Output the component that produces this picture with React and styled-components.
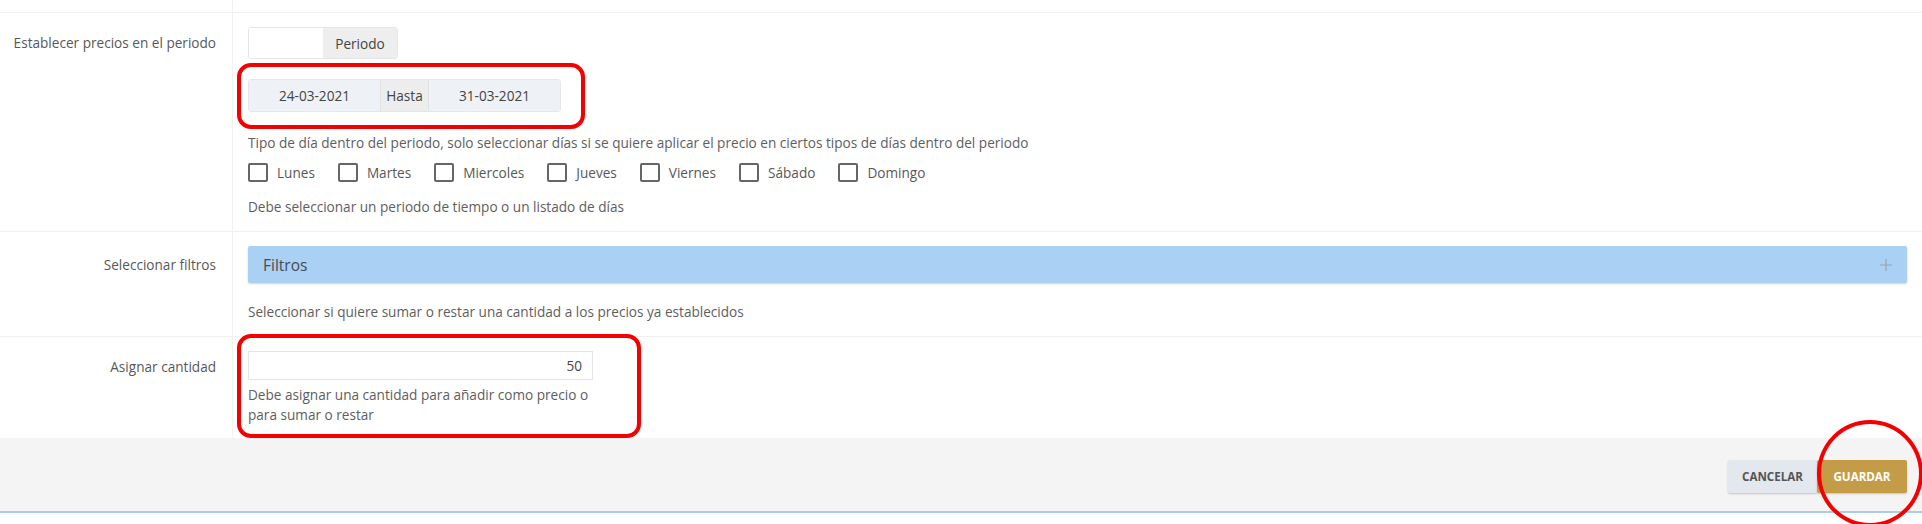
import React from 'react'
import styled, { createGlobalStyle } from 'styled-components'

const GlobalStyle = createGlobalStyle`
  html, body {
    margin: 0;
    padding: 0;
    background: #fff;
    overflow: hidden;
  }
  body {
    font-family: "Open Sans", "Noto Sans", sans-serif;
    font-size: 13.6px;
    color: #595959;
  }
  * { box-sizing: border-box; }
`;

const Page = styled.div`
  width: 1922px;
  height: 524px;
  display: flex;
  flex-direction: column;
`;

const Row = styled.div`
  display: grid;
  grid-template-columns: 233px 1fr;
  border-top: ${p => (p.$first ? 'none' : '1px solid #f0f0f0')};
  height: ${p => p.$height || 'auto'};
`;

const Label = styled.div`
  border-right: 1px solid #f1f1f1;
  text-align: right;
  padding: ${p => p.$top || 0}px 16px 0 0;
  line-height: 20px;
  color: #585858;
  white-space: nowrap;
`;

const Field = styled.div`
  padding: 14px 15px ${p => p.$bottom || 14}px 15px;
  display: flex;
  flex-direction: column;
  align-items: flex-start;
`;

const Group = styled.div`
  display: flex;
  height: ${p => p.$h}px;
  border-radius: 3px;
  overflow: hidden;
  border: 1px solid #e6e6e6;
`;

const Part = styled.div`
  width: ${p => p.$w}px;
  display: flex;
  align-items: center;
  justify-content: center;
  background: ${p => p.$bg || '#fff'};
  border-left: ${p => (p.$sep ? '1px solid #e2e2e2' : 'none')};
  color: #444;
`;

const Marked = styled.div`
  position: relative;
  &::after {
    content: '';
    position: absolute;
    inset: ${p => p.$inset};
    border: 4px solid #f40000;
    border-radius: ${p => p.$radius || '14px'};
    pointer-events: none;
  }
`;

const Help = styled.div`
  line-height: 20px;
  color: #5e5e5e;
  margin-top: ${p => p.$mt || 0}px;
  width: ${p => p.$w || 'auto'};
`;

const Days = styled.div`
  display: flex;
  align-items: center;
  margin-top: 10px;
  height: 19px;
`;

const Day = styled.label`
  display: flex;
  align-items: center;
  margin-right: 23px;
  color: #585858;
  line-height: 19px;
`;

const Box = styled.span`
  width: 20px;
  height: 19px;
  border: 2px solid #666;
  border-radius: 2px;
  margin-right: 9px;
  background: #fff;
`;

const Panel = styled.div`
  align-self: stretch;
  height: 37px;
  background: #aad0f4;
  border-radius: 2px;
  box-shadow: 0 1px 2px rgba(0, 0, 0, 0.18);
  display: flex;
  align-items: center;
  justify-content: space-between;
  padding: 0 14px 0 15px;
  font-size: 15.5px;
  color: #454c55;
`;

const Amount = styled.div`
  width: 345px;
  height: 29px;
  border: 1px solid #e4e4e4;
  display: flex;
  align-items: center;
  justify-content: flex-end;
  padding-right: 10px;
  color: #444;
`;

const Footer = styled.div`
  height: 75px;
  background: #f4f4f4;
  border-top: 1px solid #f4f4f4;
  border-bottom: 2px solid #a8cded;
  display: flex;
  justify-content: flex-end;
  align-items: flex-start;
  padding: 21px 15px 0 0;
`;

const Button = styled.button`
  height: 33px;
  width: ${p => p.$w}px;
  border: none;
  border-radius: 2px;
  font-family: "Open Sans", sans-serif;
  font-size: 11.6px;
  font-weight: 700;
  background: ${p => (p.$primary ? '#c49c48' : '#e3e7ee')};
  color: ${p => (p.$primary ? '#fff' : '#555')};
  box-shadow: 0 1px 2px rgba(0, 0, 0, 0.2);
  cursor: pointer;
`;

const dias = ['Lunes', 'Martes', 'Miercoles', 'Jueves', 'Viernes', 'Sábado', 'Domingo']

const PlusIcon = () => (
  <svg width="14" height="14" viewBox="0 0 14 14">
    <path d="M7 1v12M1 7h12" stroke="#9aa4ae" strokeWidth="1.2" />
  </svg>
)

export default function App() {
  return (
    <Page>
      <GlobalStyle />
      <Row $first $height="12px">
        <Label />
        <div />
      </Row>

      <Row>
        <Label $top={20}>Establecer precios en el periodo</Label>
        <Field>
          <Group $h={32}>
            <Part $w={74} />
            <Part $w={74} $bg="#eeeeee">Periodo</Part>
          </Group>
          <Marked $inset="-16px -24px -17px -11px" style={{ marginTop: 20 }}>
            <Group $h={33}>
              <Part $w={131} $bg="#eef1f5">24-03-2021</Part>
              <Part $w={48} $bg="#ededed" $sep>Hasta</Part>
              <Part $w={132} $bg="#eef1f5" $sep>31-03-2021</Part>
            </Group>
          </Marked>
          <Help $mt={21}>
            Tipo de día dentro del periodo, solo seleccionar días si se quiere aplicar el precio en ciertos tipos de días dentro del periodo
          </Help>
          <Days>
            {dias.map(d => (
              <Day key={d}>
                <Box />
                {d}
              </Day>
            ))}
          </Days>
          <Help $mt={15}>Debe seleccionar un periodo de tiempo o un listado de días</Help>
        </Field>
      </Row>

      <Row>
        <Label $top={23}>Seleccionar filtros</Label>
        <Field>
          <Panel>
            <span>Filtros</span>
            <PlusIcon />
          </Panel>
          <Help $mt={19}>Seleccionar si quiere sumar o restar una cantidad a los precios ya establecidos</Help>
        </Field>
      </Row>

      <Row>
        <Label $top={20}>Asignar cantidad</Label>
        <Field $bottom={13}>
          <Marked $inset="-17px -48px -13px -11px">
            <Amount>50</Amount>
            <Help $mt={5} $w="345px">
              Debe asignar una cantidad para añadir como precio o para sumar o restar
            </Help>
          </Marked>
        </Field>
      </Row>

      <Footer>
        <Button $w={89}>CANCELAR</Button>
        <Marked $inset="-40px -16px -34px 0" $radius="50%">
          <Button $w={90} $primary>GUARDAR</Button>
        </Marked>
      </Footer>
    </Page>
  )
}
